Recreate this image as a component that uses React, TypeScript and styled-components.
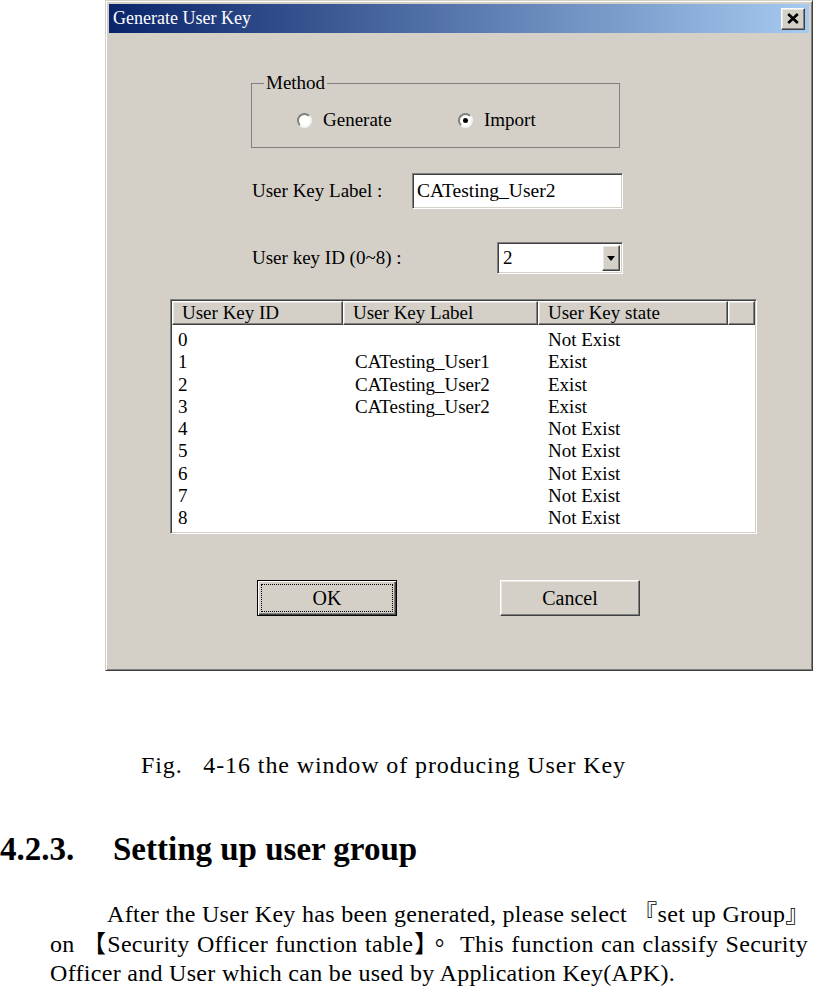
import React from 'react';
import styled, { createGlobalStyle } from 'styled-components';

const GlobalStyle = createGlobalStyle`
  body {
    margin: 0;
    background: #fff;
    color: #000;
    font-family: "Liberation Serif", "Noto Sans CJK TC", serif;
  }
`;

const raised = `
  border: 1px solid;
  border-color: #fff #404040 #404040 #fff;
  box-shadow: inset -1px -1px #808080, inset 1px 1px #e8e6e1;
`;

const sunken = `
  border: 1px solid;
  border-color: #808080 #fff #fff #808080;
  box-shadow: inset 1px 1px #404040, inset -1px -1px #d4d0c8;
`;

const rows = [
  { id: '0', label: '', state: 'Not Exist' },
  { id: '1', label: 'CATesting_User1', state: 'Exist' },
  { id: '2', label: 'CATesting_User2', state: 'Exist' },
  { id: '3', label: 'CATesting_User2', state: 'Exist' },
  { id: '4', label: '', state: 'Not Exist' },
  { id: '5', label: '', state: 'Not Exist' },
  { id: '6', label: '', state: 'Not Exist' },
  { id: '7', label: '', state: 'Not Exist' },
  { id: '8', label: '', state: 'Not Exist' },
];

const App: React.FC = () => {
  return (
    <Page>
      <GlobalStyle />
      <Window>
        <TitleBar>
          <Title>Generate User Key</Title>
          <CloseButton>
            <svg width="12" height="11" viewBox="0 0 12 11">
              <path d="M1.2 1 L10.8 10 M10.8 1 L1.2 10" stroke="#000" strokeWidth="2.6" />
            </svg>
          </CloseButton>
        </TitleBar>
        <Client>
          <Group>
            <Legend>Method</Legend>
            <RadioRow>
              <RadioItem>
                <RadioDot />
                <span>Generate</span>
              </RadioItem>
              <RadioItem>
                <RadioDot $checked />
                <span>Import</span>
              </RadioItem>
            </RadioRow>
          </Group>

          <FieldRow $top={25}>
            <FieldLabel $width={160}>User Key Label :</FieldLabel>
            <TextBox>CATesting_User2</TextBox>
          </FieldRow>

          <FieldRow $top={33}>
            <FieldLabel $width={245}>User key ID (0~8) :</FieldLabel>
            <Combo>
              <ComboValue>2</ComboValue>
              <ComboArrow>
                <svg width="8" height="5" viewBox="0 0 8 5">
                  <path d="M0 0 H8 L4 5 Z" fill="#000" />
                </svg>
              </ComboArrow>
            </Combo>
          </FieldRow>

          <ListView>
            <ListHeader>
              <HeaderCell>User Key ID</HeaderCell>
              <HeaderCell>User Key Label</HeaderCell>
              <HeaderCell>User Key state</HeaderCell>
              <HeaderCell />
            </ListHeader>
            <ListBody>
              {rows.map((r) => (
                <ListRow key={r.id}>
                  <Cell $pad={6}>{r.id}</Cell>
                  <Cell $pad={12}>{r.label}</Cell>
                  <Cell $pad={10}>{r.state}</Cell>
                </ListRow>
              ))}
            </ListBody>
          </ListView>

          <ButtonRow>
            <DialogButton $default>
              <FocusRect>OK</FocusRect>
            </DialogButton>
            <DialogButton>
              <FocusRect $hidden>Cancel</FocusRect>
            </DialogButton>
          </ButtonRow>
        </Client>
      </Window>

      <Caption>Fig.&nbsp;&nbsp; 4-16 the window of producing User Key</Caption>

      <Heading>
        <HeadingNumber>4.2.3.</HeadingNumber>Setting up user group
      </Heading>

      <Paragraph>
        <Line $indent={57}>After the User Key has been generated, please select 『set up Group』</Line>
        <Line>on 【Security Officer function table】。 This function can classify Security</Line>
        <Line $last>Officer and User which can be used by Application Key(APK).</Line>
      </Paragraph>
    </Page>
  );
};

const Page = styled.div`
  width: 814px;
  padding-bottom: 20px;
`;

const Window = styled.div`
  box-sizing: border-box;
  margin-left: 105px;
  width: 708px;
  height: 671px;
  padding: 3px;
  background: #d4d0c8;
  border: 1px solid;
  border-color: #d4d0c8 #404040 #404040 #d4d0c8;
  box-shadow: inset 1px 1px #fff, inset -1px -1px #808080;
  display: flex;
  flex-direction: column;
`;

const TitleBar = styled.div`
  height: 29px;
  flex-shrink: 0;
  display: flex;
  align-items: center;
  justify-content: space-between;
  padding: 0 4px;
  background: linear-gradient(to right, #0a246a, #a6caf0);
`;

const Title = styled.span`
  color: #fff;
  font-size: 18px;
`;

const CloseButton = styled.div`
  box-sizing: border-box;
  width: 24px;
  height: 22px;
  display: flex;
  align-items: center;
  justify-content: center;
  background: #d4d0c8;
  ${raised}
`;

const Client = styled.div`
  flex: 1;
  display: flex;
  flex-direction: column;
  align-items: flex-start;
  font-size: 19px;
`;

const Group = styled.fieldset`
  box-sizing: border-box;
  width: 369px;
  margin: 40px 0 0 142px;
  padding: 17px 0 17px 12px;
  border: 1px solid #808080;
  min-width: 0;
`;

const Legend = styled.legend`
  padding: 0 2px;
  font-size: 19px;
  line-height: 20px;
`;

const RadioRow = styled.div`
  display: flex;
  align-items: center;
  height: 20px;
  margin-left: 33px;
`;

const RadioItem = styled.label`
  width: 178px;
  display: flex;
  align-items: center;
  gap: 11px;
  font-size: 19px;
`;

const RadioDot = styled.span<{ $checked?: boolean }>`
  box-sizing: border-box;
  width: 15px;
  height: 15px;
  border-radius: 50%;
  background: #fff;
  border: 2px solid;
  border-color: #808080 #f4f3f0 #f4f3f0 #808080;
  display: flex;
  align-items: center;
  justify-content: center;
  &::after {
    content: '';
    width: 5px;
    height: 5px;
    border-radius: 50%;
    background: ${({ $checked }) => ($checked ? '#000' : 'transparent')};
  }
`;

const FieldRow = styled.div<{ $top: number }>`
  display: flex;
  align-items: center;
  margin: ${({ $top }) => $top}px 0 0 143px;
`;

const FieldLabel = styled.span<{ $width: number }>`
  width: ${({ $width }) => $width}px;
  font-size: 19px;
`;

const TextBox = styled.div`
  box-sizing: border-box;
  width: 211px;
  height: 36px;
  padding: 0 4px;
  display: flex;
  align-items: center;
  background: #fff;
  font-size: 19.5px;
  ${sunken}
`;

const Combo = styled.div`
  box-sizing: border-box;
  width: 126px;
  height: 32px;
  padding: 2px;
  display: flex;
  align-items: stretch;
  justify-content: space-between;
  background: #fff;
  ${sunken}
`;

const ComboValue = styled.span`
  display: flex;
  align-items: center;
  padding-left: 3px;
  font-size: 19px;
`;

const ComboArrow = styled.span`
  box-sizing: border-box;
  width: 18px;
  display: flex;
  align-items: center;
  justify-content: center;
  background: #d4d0c8;
  ${raised}
`;

const ListView = styled.div`
  box-sizing: border-box;
  width: 587px;
  height: 235px;
  margin: 25px 0 0 61px;
  background: #fff;
  ${sunken}
  padding: 1px;
  display: flex;
  flex-direction: column;
`;

const ListHeader = styled.div`
  display: grid;
  grid-template-columns: 171px 195px 190px 1fr;
  height: 24px;
  background: #d4d0c8;
`;

const HeaderCell = styled.div`
  box-sizing: border-box;
  padding-left: 9px;
  font-size: 19px;
  line-height: 22px;
  white-space: nowrap;
  ${raised}
`;

const ListBody = styled.div`
  padding-top: 4px;
`;

const ListRow = styled.div`
  display: grid;
  grid-template-columns: 171px 195px 190px 1fr;
  height: 22.3px;
  line-height: 22.3px;
  font-size: 19px;
`;

const Cell = styled.span<{ $pad: number }>`
  padding-left: ${({ $pad }) => $pad}px;
  white-space: nowrap;
`;

const ButtonRow = styled.div`
  display: flex;
  gap: 103px;
  margin: 46px 0 0 148px;
`;

const DialogButton = styled.div<{ $default?: boolean }>`
  box-sizing: border-box;
  width: 140px;
  height: 36px;
  padding: 3px;
  display: flex;
  background: #d4d0c8;
  font-size: 20px;
  ${({ $default }) =>
    $default
      ? `
    border: 1px solid #000;
    box-shadow: inset 1px 1px #fff, inset -1px -1px #404040, inset -2px -2px #808080;
  `
      : raised}
`;

const FocusRect = styled.span<{ $hidden?: boolean }>`
  flex: 1;
  display: flex;
  align-items: center;
  justify-content: center;
  border: 1px dotted ${({ $hidden }) => ($hidden ? 'transparent' : '#000')};
`;

const Caption = styled.div`
  margin-top: 79px;
  padding-left: 141px;
  font-size: 24px;
  line-height: 30px;
  letter-spacing: 0.9px;
`;

const Heading = styled.h3`
  margin: 49px 0 0;
  font-size: 33px;
  line-height: 40px;
  font-weight: bold;
`;

const HeadingNumber = styled.span`
  display: inline-block;
  width: 113px;
`;

const Paragraph = styled.div`
  margin: 31px 0 0 50px;
  width: 758px;
  font-size: 24px;
  line-height: 29.5px;
  letter-spacing: 0.3px;
`;

const Line = styled.div<{ $indent?: number; $last?: boolean }>`
  padding-left: ${({ $indent }) => $indent || 0}px;
  white-space: nowrap;
  text-align: ${({ $last }) => ($last ? 'left' : 'justify')};
  text-align-last: ${({ $last }) => ($last ? 'left' : 'justify')};
`;

export default App;
